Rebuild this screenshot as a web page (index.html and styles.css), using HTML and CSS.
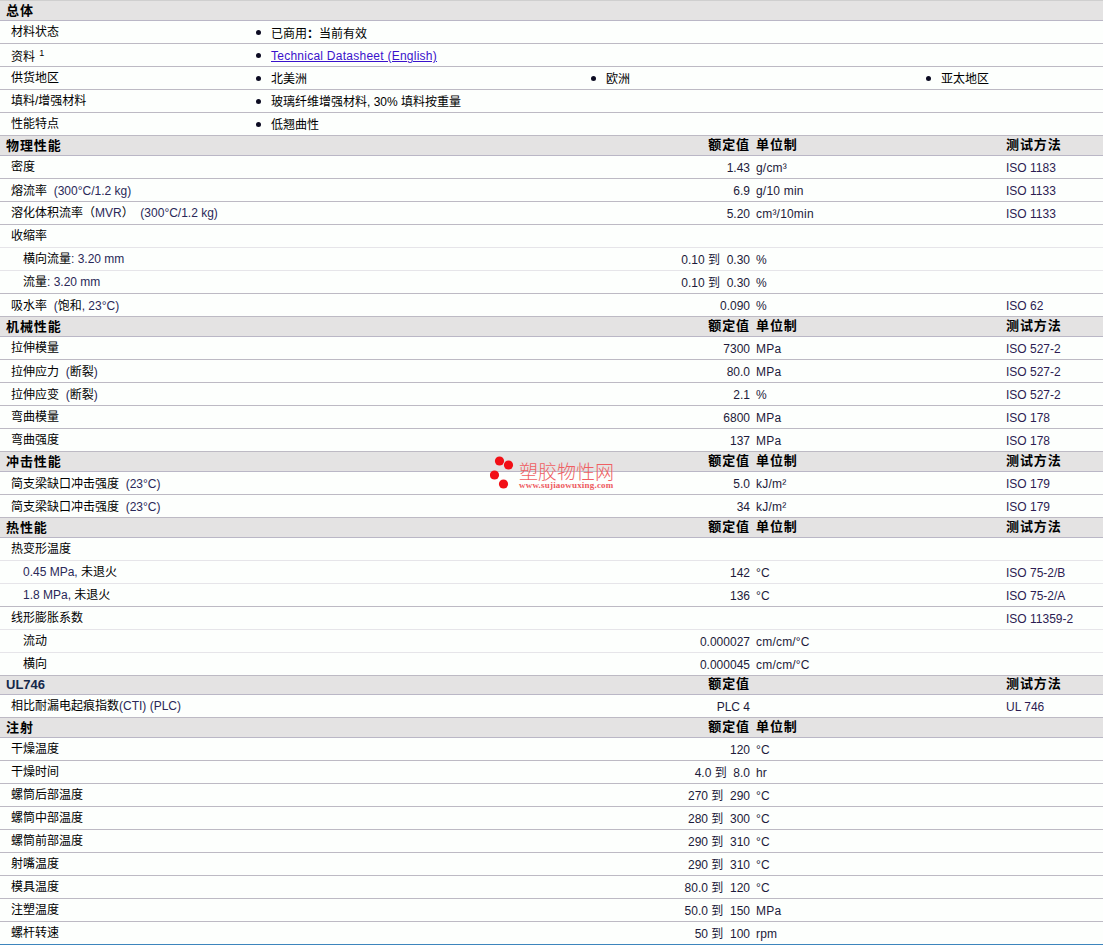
FILE: index.html
```html
<!DOCTYPE html>
<html lang="zh-CN">
<head>
<meta charset="utf-8">
<title>物性表</title>
<link rel="stylesheet" href="styles.css">
</head>
<body>
<main class="sheet">
  <div class="head"><b>总体</b></div>
  <div class="over"><span class="n">材料状态</span><ul class="bl"><li class="cjk">已商用<span class="fw">：</span>当前有效</li></ul></div>
  <div class="over"><span class="n low">资料 <sup>1</sup></span><ul class="bl"><li><a href="#">Technical Datasheet (English)</a></li></ul></div>
  <div class="over"><span class="n">供货地区</span><ul class="bl"><li class="cjk">北美洲</li><li class="cjk">欧洲</li><li class="cjk">亚太地区</li></ul></div>
  <div class="over"><span class="n">填料/增强材料</span><ul class="bl"><li class="cjk">玻璃纤维增强材料, 30% 填料按重量</li></ul></div>
  <div class="over"><span class="n">性能特点</span><ul class="bl"><li class="cjk">低翘曲性</li></ul></div>

  <div class="head"><b>物理性能</b><b class="v">额定值</b><b class="u">单位制</b><b class="m">测试方法</b></div>
  <div class="row"><span class="n">密度</span><span class="v">1.43</span><span class="u">g/cm³</span><span class="m">ISO 1183</span></div>
  <div class="row"><span class="n mix">熔流率 &nbsp;<i>(300°C/1.2 kg)</i></span><span class="v">6.9</span><span class="u">g/10 min</span><span class="m">ISO 1133</span></div>
  <div class="row"><span class="n">溶化体积流率（<i>MVR</i>） &nbsp;<i>(300°C/1.2 kg)</i></span><span class="v">5.20</span><span class="u">cm³/10min</span><span class="m">ISO 1133</span></div>
  <div class="row lt"><span class="n">收缩率</span></div>
  <div class="row lt"><span class="n sub">横向流量<i>: 3.20 mm</i></span><span class="v">0.10 到 &nbsp;0.30</span><span class="u">%</span></div>
  <div class="row"><span class="n sub">流量<i>: 3.20 mm</i></span><span class="v">0.10 到 &nbsp;0.30</span><span class="u">%</span></div>
  <div class="row"><span class="n mix">吸水率 &nbsp;<i>(</i>饱和<i>, 23°C)</i></span><span class="v">0.090</span><span class="u">%</span><span class="m">ISO 62</span></div>

  <div class="head"><b>机械性能</b><b class="v">额定值</b><b class="u">单位制</b><b class="m">测试方法</b></div>
  <div class="row"><span class="n">拉伸模量</span><span class="v">7300</span><span class="u">MPa</span><span class="m">ISO 527-2</span></div>
  <div class="row"><span class="n mix">拉伸应力 &nbsp;<i>(</i>断裂<i>)</i></span><span class="v">80.0</span><span class="u">MPa</span><span class="m">ISO 527-2</span></div>
  <div class="row"><span class="n mix">拉伸应变 &nbsp;<i>(</i>断裂<i>)</i></span><span class="v">2.1</span><span class="u">%</span><span class="m">ISO 527-2</span></div>
  <div class="row"><span class="n">弯曲模量</span><span class="v">6800</span><span class="u">MPa</span><span class="m">ISO 178</span></div>
  <div class="row"><span class="n">弯曲强度</span><span class="v">137</span><span class="u">MPa</span><span class="m">ISO 178</span></div>

  <div class="head"><b>冲击性能</b><b class="v">额定值</b><b class="u">单位制</b><b class="m">测试方法</b></div>
  <div class="row"><span class="n mix">简支梁缺口冲击强度 &nbsp;<i>(23°C)</i></span><span class="v">5.0</span><span class="u">kJ/m²</span><span class="m">ISO 179</span></div>
  <div class="row"><span class="n mix">简支梁缺口冲击强度 &nbsp;<i>(23°C)</i></span><span class="v">34</span><span class="u">kJ/m²</span><span class="m">ISO 179</span></div>

  <div class="head"><b>热性能</b><b class="v">额定值</b><b class="u">单位制</b><b class="m">测试方法</b></div>
  <div class="row lt"><span class="n">热变形温度</span></div>
  <div class="row lt"><span class="n sub"><i>0.45 MPa, </i>未退火</span><span class="v">142</span><span class="u">°C</span><span class="m">ISO 75-2/B</span></div>
  <div class="row"><span class="n sub"><i>1.8 MPa, </i>未退火</span><span class="v">136</span><span class="u">°C</span><span class="m">ISO 75-2/A</span></div>
  <div class="row lt"><span class="n">线形膨胀系数</span><span class="m">ISO 11359-2</span></div>
  <div class="row lt"><span class="n sub">流动</span><span class="v">0.000027</span><span class="u">cm/cm/°C</span></div>
  <div class="row"><span class="n sub">横向</span><span class="v">0.000045</span><span class="u">cm/cm/°C</span></div>

  <div class="head short"><b class="latin">UL746</b><b class="v">额定值</b><b class="m">测试方法</b></div>
  <div class="row"><span class="n">相比耐漏电起痕指数<i>(CTI) (PLC)</i></span><span class="v">PLC 4</span><span class="m">UL 746</span></div>

  <div class="head"><b>注射</b><b class="v">额定值</b><b class="u">单位制</b></div>
  <div class="row"><span class="n">干燥温度</span><span class="v">120</span><span class="u">°C</span></div>
  <div class="row"><span class="n">干燥时间</span><span class="v">4.0 到 &nbsp;8.0</span><span class="u">hr</span></div>
  <div class="row"><span class="n">螺筒后部温度</span><span class="v">270 到 &nbsp;290</span><span class="u">°C</span></div>
  <div class="row"><span class="n">螺筒中部温度</span><span class="v">280 到 &nbsp;300</span><span class="u">°C</span></div>
  <div class="row"><span class="n">螺筒前部温度</span><span class="v">290 到 &nbsp;310</span><span class="u">°C</span></div>
  <div class="row"><span class="n">射嘴温度</span><span class="v">290 到 &nbsp;310</span><span class="u">°C</span></div>
  <div class="row"><span class="n">模具温度</span><span class="v">80.0 到 &nbsp;120</span><span class="u">°C</span></div>
  <div class="row"><span class="n">注塑温度</span><span class="v">50.0 到 &nbsp;150</span><span class="u">MPa</span></div>
  <div class="row last"><span class="n">螺杆转速</span><span class="v">50 到 &nbsp;100</span><span class="u">rpm</span></div>

  <div class="mark">
    <svg class="dots" width="28" height="36" viewBox="0 0 28 36" aria-hidden="true">
      <circle cx="9.5" cy="6" r="4.6"/><circle cx="18.5" cy="10" r="4.6"/><circle cx="4.5" cy="20" r="4.6"/><circle cx="13.5" cy="29" r="4.6"/>
    </svg>
    <div class="brand">
      <span class="zh">塑胶物性网</span>
      <span class="url">www.sujiaowuxing.com</span>
    </div>
  </div>
</main>
</body>
</html>
```
FILE: styles.css
```css
* { box-sizing: border-box; }
html, body { margin: 0; background: #fdfffd; }
.sheet {
  position: relative;
  width: 1103px;
  border-top: 1px solid #cfcfcf;
  font: 12px/16px "Liberation Sans", "Noto Sans CJK SC", sans-serif;
  color: #1c1a3a;
}
.row, .head {
  display: grid;
  grid-template-columns: 650px 100px 250px 103px;
  align-items: center;
}
.row, .over {
  height: 23px;
  border-bottom: 1px solid #bdbac4;
}
.row.lt { border-bottom-color: #e6e5e9; }
.row.last { border-bottom: 1px solid #3d85bd; }
.head {
  height: 20px;
  border-bottom: 1px solid #bab7c6;
  background: #e4e3e3 radial-gradient(circle, #dad9d9 .5px, transparent .7px) 0 0 / 4px 4px;
  color: #000;
  font-size: 13px;
  letter-spacing: .9px;
}
.head.short { height: 19px; }
.head b:first-child { grid-column: 1; padding-left: 6px; }
.head .latin { letter-spacing: 0; color: #14284a; }
.head .v { grid-column: 2; text-align: right; padding-bottom: 2px; }
.head .u { grid-column: 3; padding-left: 6px; padding-bottom: 2px; }
.head .m { grid-column: 4; padding-left: 6px; padding-bottom: 2px; }
.n {
  grid-column: 1;
  padding-left: 11px;
  padding-bottom: 1px;
  color: #000;
  white-space: nowrap;
}
.n.sub { padding-left: 23px; }
.n.mix { padding-top: 1px; padding-bottom: 0; }
.n i { font-style: normal; color: #2a2858; }
.row .v { grid-column: 2; text-align: right; white-space: nowrap; padding-top: 1px; }
.row .u { grid-column: 3; padding-left: 6px; padding-top: 1px; letter-spacing: .2px; }
.row .m { grid-column: 4; padding-left: 6px; padding-top: 1px; color: #2c1c52; white-space: nowrap; }
.over {
  display: grid;
  grid-template-columns: 271px 1fr;
  align-items: center;
}
.over .n { grid-column: 1; }
.over .n.low { padding-top: 4px; padding-bottom: 0; }
.over sup { font-size: 9px; line-height: 0; vertical-align: 5px; margin-left: 1px; }
.bl {
  margin: 0;
  padding: 2px 0 0;
  list-style: none;
  display: grid;
  grid-template-columns: 335px 335px 1fr;
}
.bl li { position: relative; }
.bl li::before {
  content: "";
  position: absolute;
  left: -15px;
  top: 5px;
  width: 5px;
  height: 5px;
  border-radius: 50%;
  background: #0c0c22;
}
.bl .cjk { color: #000; }
.bl a { color: #3a12cc; letter-spacing: .25px; }
.fw { font-family: "Noto Sans CJK TC", sans-serif; font-weight: 700; }
.mark {
  position: absolute;
  left: 490px;
  top: 454px;
  display: flex;
  gap: 1px;
  pointer-events: none;
}
.dots { fill: #f20f16; display: block; }
.brand { display: flex; flex-direction: column; margin-top: 5px; }
.zh {
  font: 300 19px/21px "Noto Sans CJK SC", sans-serif;
  color: #ef5f63;
  white-space: nowrap;
}
.url {
  font: bold 9px/9px "Liberation Serif", serif;
  letter-spacing: .2px;
  color: #ee5a5e;
  white-space: nowrap;
}
```
